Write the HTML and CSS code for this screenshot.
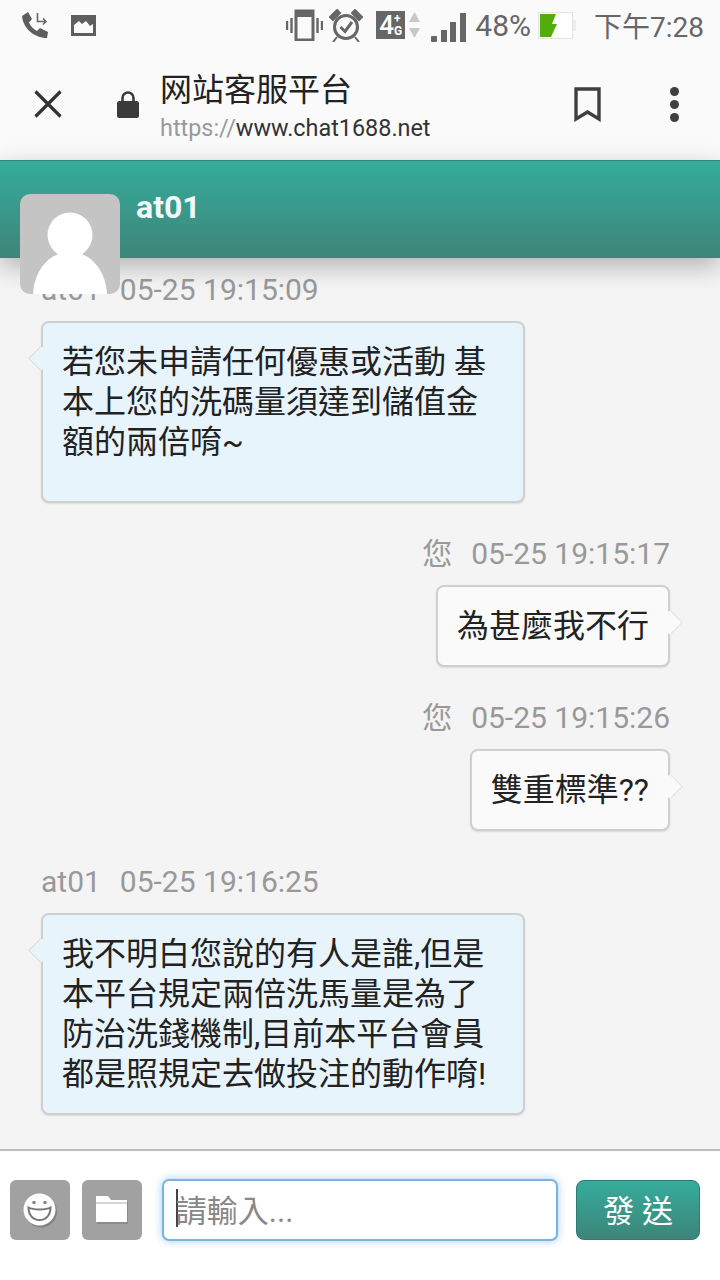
FILE: index.html
```html
<!DOCTYPE html>
<html lang="zh-TW">
<head>
    <meta charset="UTF-8">
    <meta name="viewport" content="width=device-width, initial-scale=1.0">
    <title>网站客服平台</title>
    <link rel="stylesheet" href="styles.css">
</head>
<body>

<div class="app">

    <!-- status bar -->
    <div class="status-bar">
        <svg class="ico-call" viewBox="0 0 26 26">
            <path d="M0 4 L6 0 L10 7 L7 10.500 C8.500 14 11 17 15 19 L18 16 L26 20 L25 26 C12 26 1 16 0 4 Z" fill="#5e5e5e"/>
            <path d="M15.500 1 V9.500 H24 M21 6.500 L24 9.500 L21 12.500" fill="none" stroke="#666" stroke-width="1.600"/>
        </svg>
        <svg class="ico-pic" viewBox="0 0 25 21">
            <path d="M0 0 H25 V21 H0 Z M3 18 H22 V9 L19 11 L15 6 L11 9 L8 6 L3 10 Z" fill="#5e5e5e" fill-rule="evenodd"/>
        </svg>
        <div class="status-right">
            <svg class="ico-vibrate" viewBox="0 0 37 32">
                <rect x="10" y="2" width="17" height="29" fill="none" stroke="#666" stroke-width="3"/>
                <rect x="10" y="2" width="17" height="6" fill="#666"/>
                <path d="M5.500 9 V24 M1 12 V21 M31.500 9 V24 M36 12 V21" stroke="#666" stroke-width="2.400"/>
            </svg>
            <svg class="ico-alarm" viewBox="0 0 34 33">
                <circle cx="17" cy="18" r="11.500" fill="none" stroke="#666" stroke-width="3"/>
                <path d="M11.500 18 L16 22.500 L23 13" fill="none" stroke="#666" stroke-width="3"/>
                <path d="M1 8 L8 1 L11 4 L4 11 Z M33 8 L26 1 L23 4 L30 11 Z M8 28 L4 33 M26 28 L30 33" fill="#666" stroke="#666" stroke-width="2"/>
            </svg>
            <div class="net-box">
                <span class="net-four">4</span>
                <span class="net-side"><b>+</b><b>G</b></span>
            </div>
            <svg class="ico-arrows" viewBox="0 0 13 28">
                <path d="M6.500 1 L12 11 H1 Z" fill="#c8c8c8"/>
                <path d="M6.500 27 L12 17 H1 Z" fill="#c8c8c8"/>
            </svg>
            <svg class="ico-signal" viewBox="0 0 35 29">
                <rect x="0" y="23" width="6" height="6" rx="1" fill="#666"/>
                <rect x="10" y="17" width="6" height="12" fill="#666"/>
                <rect x="19" y="9" width="6" height="20" fill="#666"/>
                <rect x="29" y="0" width="6" height="29" fill="#666"/>
            </svg>
            <span class="status-pct">48%</span>
            <svg class="ico-battery" viewBox="0 0 39 27">
                <rect x="0.500" y="0.500" width="34" height="26" fill="#fff" stroke="#e3e3e3"/>
                <rect x="35" y="8" width="3" height="11" fill="#eee"/>
                <path d="M2 2 H18 L14 12 H19 L13 25 H2 Z" fill="#52ad0c"/>
            </svg>
            <span class="status-time">下午7:28</span>
        </div>
    </div>

    <!-- browser toolbar -->
    <div class="toolbar">
        <svg class="ico-close" viewBox="0 0 28 28">
            <path d="M1.500 1.500 L26.500 26.500 M26.500 1.500 L1.500 26.500" stroke="#333" stroke-width="3.200" fill="none"/>
        </svg>
        <svg class="ico-lock" viewBox="0 0 22 27">
            <path d="M5.500 12 V7 A5.500 5.500 0 0 1 16.500 7 V12" fill="none" stroke="#3a3a3a" stroke-width="2.600"/>
            <rect x="0" y="10" width="22" height="17" rx="2.500" fill="#3a3a3a"/>
        </svg>
        <div class="page-info">
            <div class="page-title">网站客服平台</div>
            <div class="page-url"><span class="url-scheme">https://</span>www.chat1688.net</div>
        </div>
        <svg class="ico-bookmark" viewBox="0 0 27 35">
            <path d="M2 2 H25 V32 L13.500 25 L2 32 Z" fill="none" stroke="#3f3f3f" stroke-width="3.400"/>
        </svg>
        <div class="more-dots"><i></i><i></i><i></i></div>
    </div>

    <!-- chat header -->
    <div class="chat-header">
        <span class="chat-name">at01</span>
        <div class="avatar">
            <svg viewBox="0 0 100 100">
                <circle cx="50" cy="41" r="22.500" fill="#fff"/>
                <path d="M13 100 C14 78 28 58 50 58 C72 58 86 78 87 100 Z" fill="#fff"/>
            </svg>
        </div>
    </div>

    <!-- messages -->
    <div class="chat-body">
        <div class="msg msg-in">
            <div class="msg-meta"><span class="msg-from">at01</span><span>05-25 19:15:09</span></div>
            <div class="bubble bubble-tall">若您未申請任何優惠或活動 基本上您的洗碼量須達到儲值金額的兩倍唷~</div>
        </div>
        <div class="msg msg-out">
            <div class="msg-meta"><span class="msg-from">您</span><span>05-25 19:15:17</span></div>
            <div class="bubble">為甚麼我不行</div>
        </div>
        <div class="msg msg-out">
            <div class="msg-meta"><span class="msg-from">您</span><span>05-25 19:15:26</span></div>
            <div class="bubble">雙重標準??</div>
        </div>
        <div class="msg msg-in">
            <div class="msg-meta"><span class="msg-from">at01</span><span>05-25 19:16:25</span></div>
            <div class="bubble">我不明白您說的有人是誰,但是本平台規定兩倍洗馬量是為了防治洗錢機制,目前本平台會員都是照規定去做投注的動作唷!</div>
        </div>
    </div>

    <!-- input bar -->
    <div class="input-bar">
        <button class="tool-btn">
            <svg viewBox="0 0 36 36" width="36" height="36">
                <circle cx="19" cy="19.500" r="16" fill="#6e6e6e" opacity="0.600"/>
                <circle cx="17.500" cy="17.500" r="16" fill="#fff"/>
                <circle cx="12" cy="10.500" r="1.800" fill="#888"/>
                <circle cx="23" cy="10.500" r="1.800" fill="#888"/>
                <path d="M6.500 15.500 C11 18 24 18 28.500 15.500 C28.500 23 24 28 17.500 28 C11 28 6.500 23 6.500 15.500 Z" fill="#fff" stroke="#777" stroke-width="2"/>
            </svg>
        </button>
        <button class="tool-btn">
            <svg viewBox="0 0 34 30" width="34" height="30">
                <path d="M2 29 H33 V7 H2 Z" fill="#8c8c8c"/>
                <path d="M1 1 H13 L16 5 H32 V27 H1 Z" fill="#fff"/>
                <path d="M1 8 H32" stroke="#c9c9c9" stroke-width="1.500"/>
            </svg>
        </button>
        <div class="text-box"><i class="caret"></i><span class="placeholder">請輸入...</span></div>
        <button class="send-btn">發 送</button>
    </div>

</div>

</body>
</html>
```

FILE: styles.css
```css
* {
    box-sizing: border-box;
}

body {
    margin: 0;
    padding: 0;
    font-family: Roboto, "Noto Sans CJK TC", sans-serif;
    background-color: #fff;
}

.app {
    width: 720px;
    height: 1280px;
    display: flex;
    flex-direction: column;
    overflow: hidden;
}

svg {
    display: block;
    flex: none;
}

/* status bar */
.status-bar {
    height: 52px;
    flex: none;
    display: flex;
    align-items: center;
    padding: 0 16px 2px 22px;
    background-color: #fafafa;
    color: #666;
}

.ico-call {
    width: 26px;
    height: 26px;
    margin-right: 23px;
}

.ico-pic {
    width: 25px;
    height: 21px;
}

.status-right {
    margin-left: auto;
    display: flex;
    align-items: center;
}

.ico-vibrate {
    width: 37px;
    height: 32px;
    margin-right: 6px;
}

.ico-alarm {
    width: 34px;
    height: 33px;
    margin-right: 13px;
}

.net-box {
    width: 29px;
    height: 28px;
    margin-right: 3px;
    display: flex;
    align-items: center;
    justify-content: center;
    background-color: #666;
    color: #fff;
}

.net-four {
    font-size: 26px;
    font-weight: 500;
    line-height: 28px;
}

.net-side {
    display: flex;
    flex-direction: column;
    font-size: 12px;
    line-height: 12px;
}

.ico-arrows {
    width: 13px;
    height: 28px;
    margin-right: 10px;
}

.ico-signal {
    width: 35px;
    height: 29px;
    margin: 4px 9px 0 0;
}

.status-pct {
    font-size: 30px;
    margin-right: 7px;
}

.ico-battery {
    width: 39px;
    height: 27px;
    margin-right: 17px;
}

.status-time {
    font-size: 28px;
}

/* toolbar */
.toolbar {
    height: 108px;
    flex: none;
    display: flex;
    align-items: center;
    padding: 0 42px 4px 34px;
    background-color: #fafafa;
}

.ico-close {
    width: 28px;
    height: 28px;
    margin-right: 55px;
}

.ico-lock {
    width: 22px;
    height: 27px;
    margin-right: 21px;
}

.page-info {
    flex: 1;
    margin-top: 8px;
}

.page-title {
    font-family: "Noto Sans CJK SC", sans-serif;
    font-size: 32px;
    line-height: 38px;
    color: #222;
}

.page-url {
    padding-top: 3px;
    font-size: 23.400px;
    line-height: 39px;
    color: #333;
}

.url-scheme {
    color: #999;
}

.ico-bookmark {
    width: 27px;
    height: 35px;
    margin-right: 69px;
}

.more-dots {
    display: flex;
    flex-direction: column;
    gap: 4px;
    margin-right: -1px;
}

.more-dots i {
    width: 9px;
    height: 9px;
    border-radius: 50%;
    background-color: #3f3f3f;
}

/* chat header */
.chat-header {
    position: relative;
    z-index: 2;
    height: 98px;
    flex: none;
    padding: 29px 0 0 136px;
    border-top: 1px solid #2c8a7e;
    background: linear-gradient(#35ac9c, #3d8579);
    box-shadow: 0 8px 24px rgba(0, 0, 0, 0.28);
}

.chat-name {
    font-size: 32px;
    font-weight: 700;
    line-height: 34px;
    color: #f2f8f7;
}

.avatar {
    position: absolute;
    left: 20px;
    top: 33px;
    width: 100px;
    height: 100px;
    border-radius: 10px;
    overflow: hidden;
    background-color: #c4c4c4;
}

/* messages */
.chat-body {
    flex: 1;
    padding: 15px 50px 0 41px;
    background-color: #f4f4f4;
}

.msg {
    display: flex;
    flex-direction: column;
    margin-bottom: 34px;
}

.msg-in {
    align-items: flex-start;
}

.msg-out {
    align-items: flex-end;
}

.msg-meta {
    height: 33px;
    margin-bottom: 15px;
    font-size: 30px;
    line-height: 34px;
    color: #999;
}

.msg-from {
    margin-right: 19px;
}

.bubble {
    position: relative;
    padding: 19px;
    border: 2px solid #cfcfcf;
    border-radius: 8px;
    box-shadow: 0 1px 2px rgba(0, 0, 0, 0.1);
    font-size: 32px;
    line-height: 40px;
    color: #222;
    background-color: #fafafa;
}

.msg-in .bubble {
    width: 484px;
    background-color: #e8f4fc;
}

.bubble-tall {
    padding-bottom: 39px;
}

/* bubble tail */
.bubble::after {
    content: "";
    position: absolute;
    top: 27px;
    width: 17px;
    height: 17px;
    background-color: inherit;
    transform: rotate(45deg);
}

.msg-in .bubble::after {
    left: -10px;
    box-shadow: -1px 1px 0 #dcdcdc;
}

.msg-out .bubble::after {
    right: -10px;
    box-shadow: 1px -1px 0 #e2e2e2;
}

/* input bar */
.input-bar {
    height: 132px;
    flex: none;
    display: flex;
    align-items: center;
    gap: 12px;
    padding: 0 20px 12px 10px;
    border-top: 2px solid #bdbdbd;
    background-color: #fff;
}

.tool-btn {
    width: 60px;
    height: 60px;
    padding: 0;
    display: flex;
    align-items: center;
    justify-content: center;
    border: none;
    border-radius: 6px;
    background-color: #a1a1a1;
}

.text-box {
    width: 397px;
    height: 62px;
    margin: 0 6px 0 8px;
    padding: 0 0 4px 12px;
    display: flex;
    align-items: center;
    border: 2px solid #79b3e0;
    border-radius: 7px;
    background-color: #fff;
    box-shadow: 0 0 8px rgba(102, 175, 233, 0.6);
}

.caret {
    width: 2px;
    height: 38px;
    margin-right: -2px;
    background-color: #444;
}

.placeholder {
    font-size: 31px;
    color: #888;
}

.send-btn {
    width: 124px;
    height: 60px;
    padding: 0 0 4px;
    border: 1px solid #2b7d70;
    border-radius: 8px;
    font-family: inherit;
    font-size: 31px;
    color: #fff;
    background: linear-gradient(#35ac9c, #3d8579);
}
```
